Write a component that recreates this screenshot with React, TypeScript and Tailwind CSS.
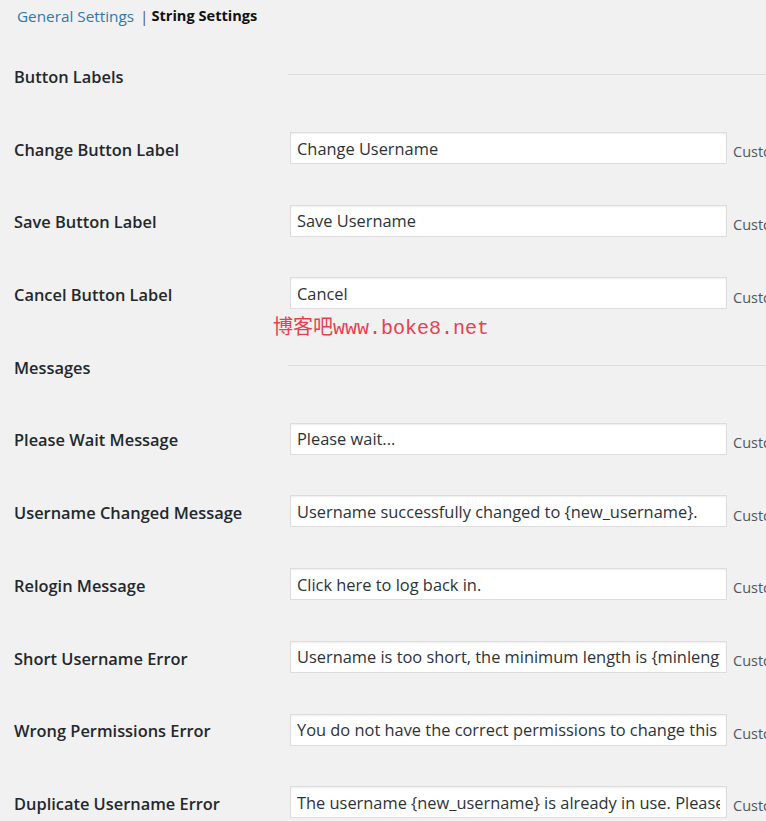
import React from 'react';

type Row = { label: string; value: string };

const sections: { title: string; rows: Row[] }[] = [
  {
    title: 'Button Labels',
    rows: [
      { label: 'Change Button Label', value: 'Change Username' },
      { label: 'Save Button Label', value: 'Save Username' },
      { label: 'Cancel Button Label', value: 'Cancel' },
    ],
  },
  {
    title: 'Messages',
    rows: [
      { label: 'Please Wait Message', value: 'Please wait...' },
      { label: 'Username Changed Message', value: 'Username successfully changed to {new_username}.' },
      { label: 'Relogin Message', value: 'Click here to log back in.' },
      { label: 'Short Username Error', value: 'Username is too short, the minimum length is {minlength}.' },
      { label: 'Wrong Permissions Error', value: 'You do not have the correct permissions to change this username.' },
      { label: 'Duplicate Username Error', value: 'The username {new_username} is already in use. Please try again.' },
    ],
  },
];

const font = { fontFamily: '"Open Sans", "Noto Sans", sans-serif' };

function SettingRow({ row }: { row: Row }) {
  return (
    <div className="flex h-[72.7px] items-center">
      <div className="w-[290px] shrink-0 pl-[14px] text-[16.4px] font-semibold text-[#23282d]">{row.label}</div>
      <input
        readOnly
        value={row.value}
        className="mb-[4px] h-[32px] w-[437px] shrink-0 border border-[#dddddd] bg-white px-[6px] text-[16.4px] text-[#2c3338] shadow-[inset_0_1px_2px_rgba(0,0,0,0.07)] outline-none"
        style={font}
      />
      <span className="ml-[6px] mt-[4px] whitespace-nowrap text-[14.5px] text-[#50575e]">Customize this text.</span>
    </div>
  );
}

export default function App() {
  return (
    <div className="relative min-h-screen w-[766px] overflow-hidden bg-[#f1f1f1]" style={font}>
      <div className="flex h-[41px] items-start pl-[17px] pt-[5px] text-[15.3px]">
        <a href="#" className="text-[#2f78ad]">General Settings</a>
        <span className="ml-[6px] text-[#555d66]">|</span>
        <span className="ml-[3px] text-[14.6px] font-bold text-[#111]">String Settings</span>
      </div>

      {sections.map((section) => (
        <div key={section.title}>
          <div className="flex h-[72.7px] items-center">
            <div className="w-[288px] shrink-0 pl-[14px] text-[16.4px] font-semibold text-[#23282d]">{section.title}</div>
            <div className="mb-[6px] h-px flex-1 bg-[#dcdcdc]" />
          </div>
          {section.rows.map((row) => (
            <SettingRow key={row.label} row={row} />
          ))}
        </div>
      ))}

      <div
        className="absolute left-[273px] top-[314px] whitespace-nowrap text-[20px] text-[#e8414e]"
        style={{ fontFamily: '"Liberation Mono", "Noto Sans CJK SC", monospace' }}
      >
        博客吧www.boke8.net
      </div>
    </div>
  );
}
